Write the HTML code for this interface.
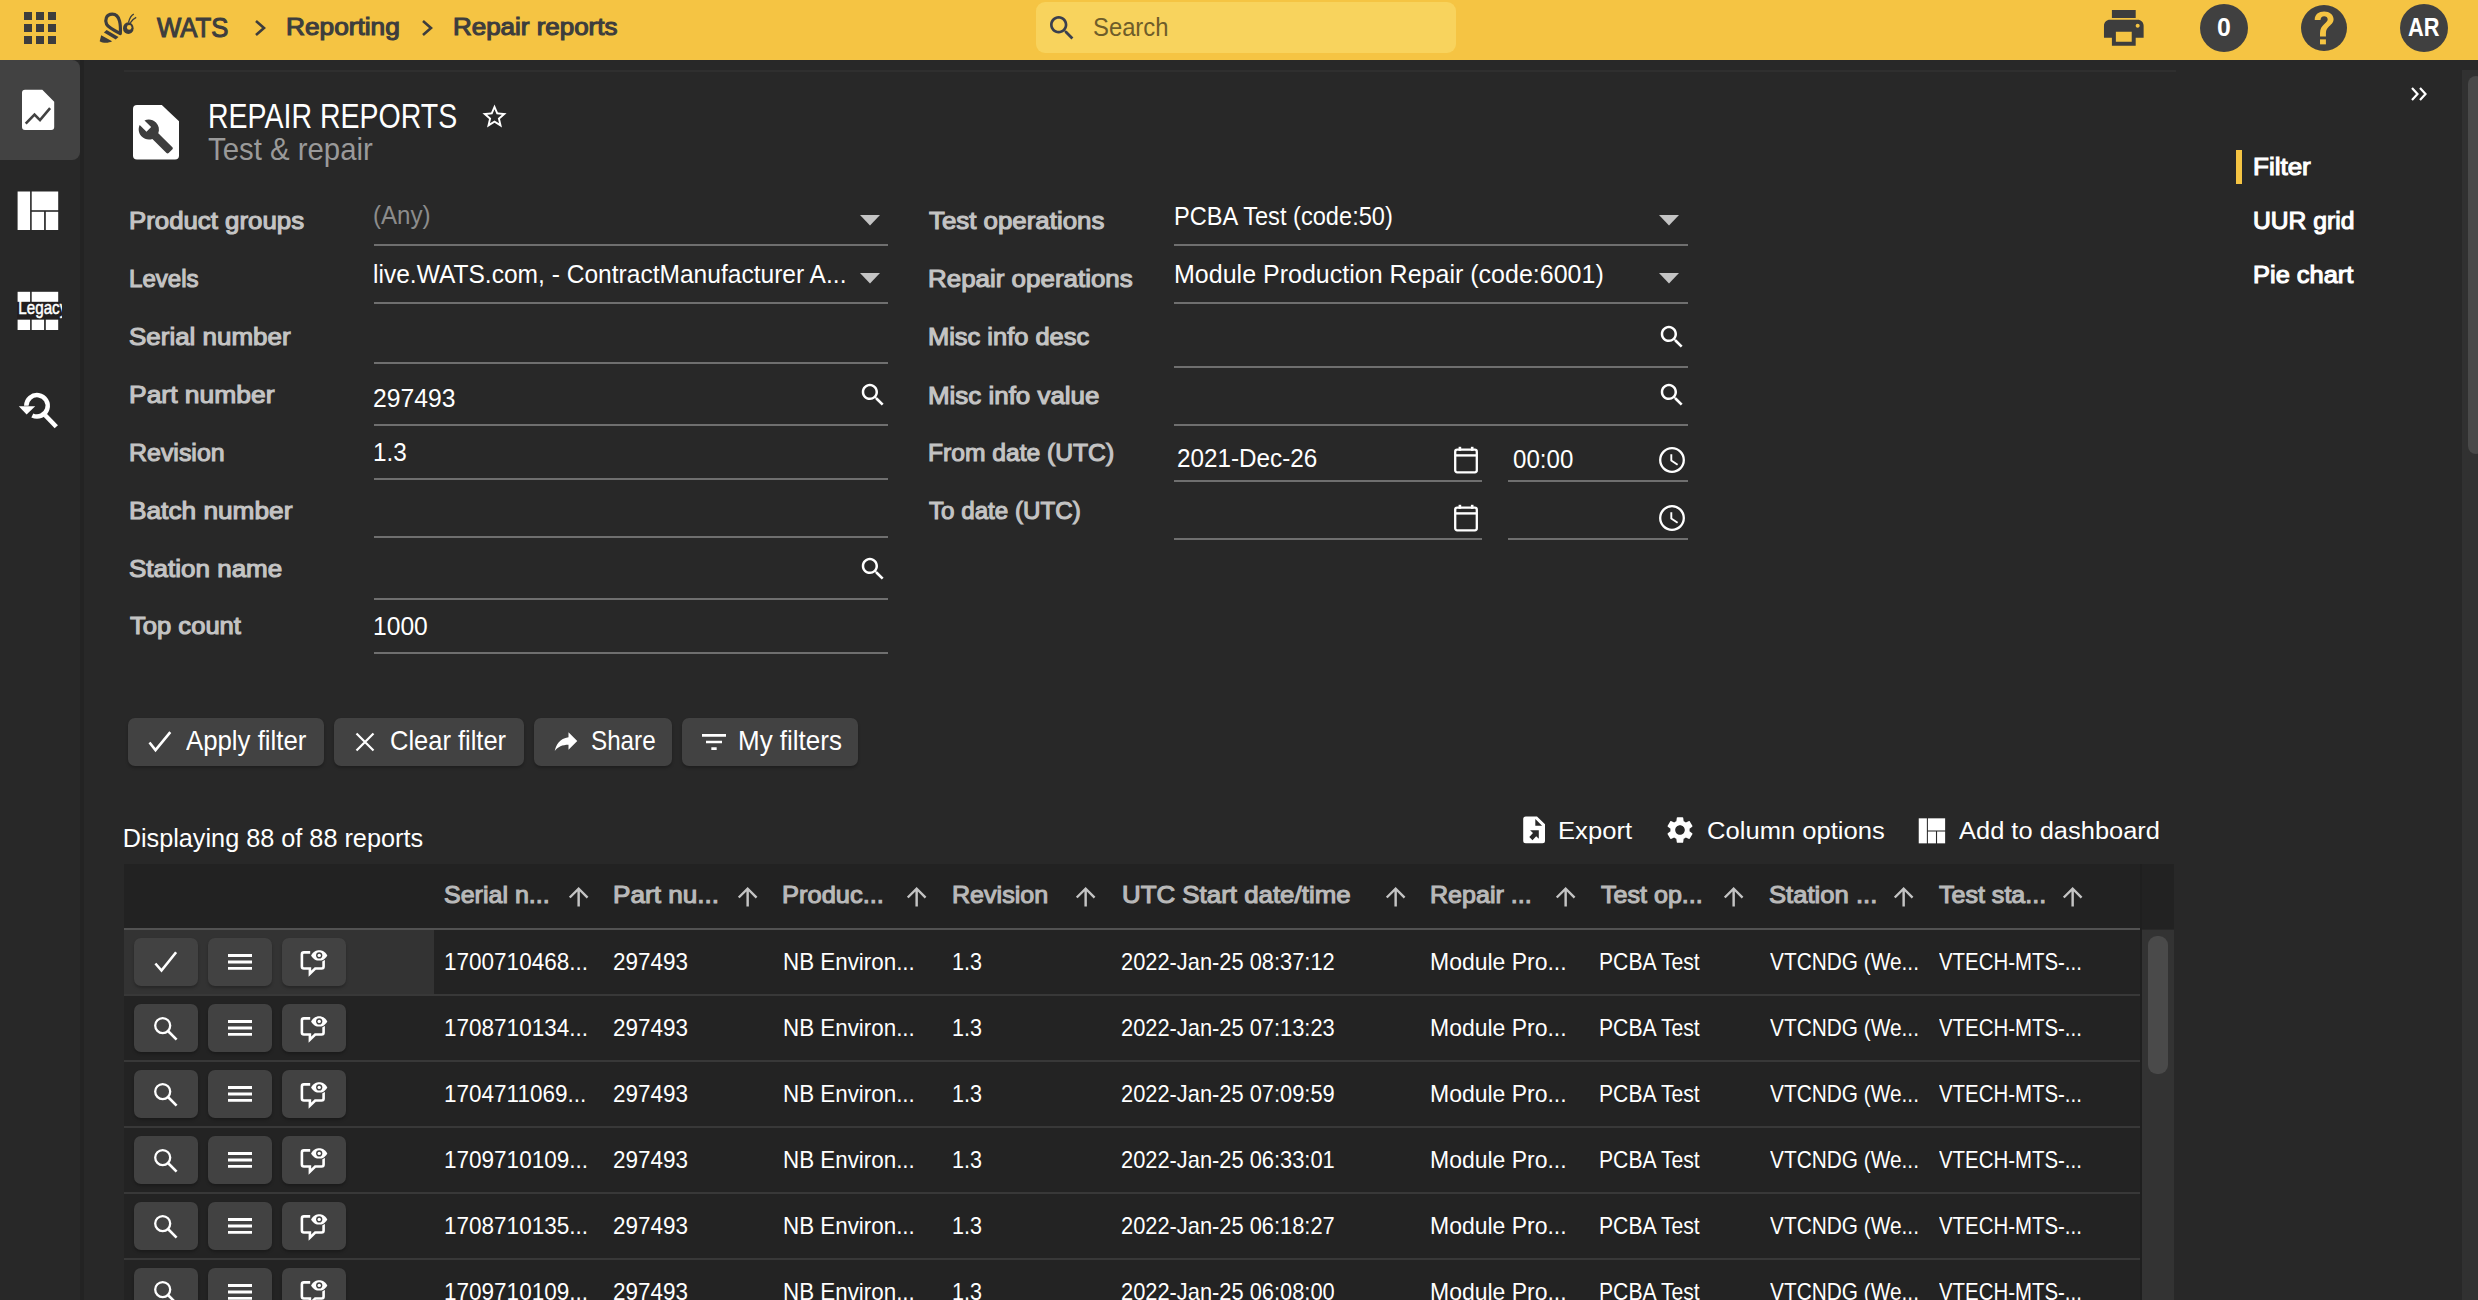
<!DOCTYPE html>
<html><head><meta charset="utf-8"><title>Repair reports</title>
<style>
html,body{margin:0;padding:0;width:2478px;height:1300px;overflow:hidden;background:#282828;font-family:"Liberation Sans",sans-serif}
.b{position:absolute}
.i{position:absolute;overflow:visible}
.t{position:absolute;white-space:pre;transform-origin:0 0}
.btn{background:#424242;border-radius:7px;box-shadow:0 2px 3px rgba(0,0,0,.25)}
.rbtn{background:#424242;border-radius:7px;box-shadow:0 2px 3px rgba(0,0,0,.25)}
</style></head><body>
<div class="b" style="left:0;top:0;width:2478px;height:60px;background:#f5c443"></div>
<svg class="i" style="left:24px;top:12px;width:32px;height:32px;" viewBox="0 0 32 32"><g fill="#3d3d3d"><rect x="0" y="0" width="8" height="8"/><rect x="12" y="0" width="8" height="8"/><rect x="24" y="0" width="8" height="8"/><rect x="0" y="12" width="8" height="8"/><rect x="12" y="12" width="8" height="8"/><rect x="24" y="12" width="8" height="8"/><rect x="0" y="24" width="8" height="8"/><rect x="12" y="24" width="8" height="8"/><rect x="24" y="24" width="8" height="8"/></g></svg>
<svg class="i" style="left:96px;top:10px;width:44px;height:36px;" viewBox="96 10 44 36"><path d="M120.3 33.6 C120.8 26 120.5 14.2 112.3 14.2 C105.8 14.2 104.8 20.5 106.6 24.2 C108 27 112 29.3 120.3 33.6 Z" fill="none" stroke="#3d3d3d" stroke-width="3.2" stroke-linejoin="round"/><g fill="#3d3d3d"><path d="M103.9 32.5 L106.6 30.1 L118.5 37.1 L115.7 39.6 Z"/><path d="M101.2 35.3 L112.1 41.3 C109 43.2 103 43.4 99.7 41.3 Z"/><ellipse cx="128.3" cy="28.2" rx="5.3" ry="5.9"/></g><circle cx="129.2" cy="27.4" r="2.3" fill="#f5c443"/><g fill="none" stroke="#3d3d3d" stroke-width="1.3"><path d="M128.5 22.5 C129.5 18.5 130.8 15.5 133.8 14.1"/><path d="M130.3 22.8 C132 20.3 134 18.4 136.2 17.4"/></g></svg>
<svg class="i" style="left:254.3px;top:19px;width:13px;height:18px;" viewBox="0 0 13 18"><path d="M2 2 L10 9 L2 16" fill="none" stroke="#3d3d3d" stroke-width="2.6"/></svg>
<svg class="i" style="left:420.6px;top:19px;width:13px;height:18px;" viewBox="0 0 13 18"><path d="M2 2 L10 9 L2 16" fill="none" stroke="#3d3d3d" stroke-width="2.6"/></svg>
<div class="b" style="left:1036px;top:2px;width:420px;height:51px;border-radius:9px;background:#f8d35d"></div>
<svg class="i" style="left:1045.8px;top:11.8px;width:32.1px;height:32.1px;" viewBox="0 0 24 24"><path fill="#3a3f4e" d="M15.5 14h-.79l-.28-.27C15.41 12.59 16 11.11 16 9.5 16 5.91 13.09 3 9.5 3S3 5.91 3 9.5 5.91 16 9.5 16c1.61 0 3.09-.59 4.23-1.57l.27.28v.79l5 4.99L20.49 19l-4.99-5zm-6 0C7.01 14 5 11.99 5 9.5S7.01 5 9.5 5 14 7.01 14 9.5 11.99 14 9.5 14z"/></svg>
<svg class="i" style="left:2100.3px;top:4.3px;width:47.6px;height:47.6px;" viewBox="0 0 24 24"><path fill="#3d3d3d" d="M19 8H5c-1.66 0-3 1.34-3 3v6h4v4h12v-4h4v-6c0-1.66-1.34-3-3-3zm-3 11H8v-5h8v5zm3-7c-.55 0-1-.45-1-1s.45-1 1-1 1 .45 1 1-.45 1-1 1zm-1-9H6v4h12V3z"/></svg>
<div class="b" style="left:2200px;top:4px;width:48px;height:48px;border-radius:50%;background:#404040"></div>
<div class="b" style="left:2400px;top:4px;width:48px;height:48px;border-radius:50%;background:#404040"></div>
<div class="b" style="left:2301px;top:5px;width:46px;height:46px;border-radius:50%;background:#404040"></div>
<svg class="i" style="left:2310px;top:11px;width:28px;height:36px;" viewBox="0 0 28 36"><g transform="translate(4.7,0.6) scale(1.18,1.11) translate(-6,-3.5)"><path d="M6 11 C6 6 9.5 3.5 14 3.5 C18.5 3.5 22 6.5 22 10.5 C22 14 19.5 15.5 17.5 17.5 C15.8 19.2 15.5 21 15.5 23.5 L15.5 26 L10.5 26 L10.5 23 C10.5 19 12 17 14 15 C16 13 17 12 17 10.5 C17 8.8 15.7 7.7 14 7.7 C12.2 7.7 10.9 9 10.9 11 Z" fill="#f5c443"/><rect x="10.5" y="28.5" width="5" height="4.5" fill="#f5c443"/></g></svg>
<div class="b" style="left:80px;top:60px;width:4px;height:1240px;background:#232323"></div>
<div class="b" style="left:-8px;top:60px;width:88px;height:100px;border-radius:0 8px 8px 8px;background:#424242"></div>
<svg class="i" style="left:20px;top:88px;width:36px;height:44px;" viewBox="20 88 36 44"><path d="M25 89.7 H42.3 L54.2 101.7 V127 A3 3 0 0 1 51.2 130 H25 A3 3 0 0 1 22 127 V92.7 A3 3 0 0 1 25 89.7 Z" fill="#fff"/><path d="M25.7 123.6 L34.5 114.6 L40 120.1 L50.1 108.1" fill="none" stroke="#424242" stroke-width="2.6"/></svg>
<svg class="i" style="left:17px;top:191px;width:42px;height:40px;" viewBox="0 0 42 40"><g fill="#fff" transform="translate(0.6,0.5) scale(1.0)"><rect x="0" y="0" width="12.5" height="38.5"/><rect x="14.1" y="0" width="26.5" height="18.7"/><rect x="14.1" y="20.3" width="12.4" height="18.2"/><rect x="28.2" y="20.3" width="12.4" height="18.2"/></g></svg>
<svg class="i" style="left:17px;top:290px;width:45px;height:42px;overflow:hidden" viewBox="17 290 45 42"><g fill="#fff"><rect x="17.6" y="291.8" width="12.5" height="10"/><rect x="31.7" y="291.8" width="26.5" height="10"/><rect x="17.6" y="319.7" width="12.5" height="10.3"/><rect x="31.7" y="319.7" width="12.4" height="10.3"/><rect x="45.8" y="319.7" width="12.4" height="10.3"/></g><rect x="14.2" y="302" width="47.8" height="17" fill="#231f20"/><text x="18.3" y="314.4" font-family="Liberation Sans" font-size="19" fill="#fff" stroke="#fff" stroke-width="0.5" textLength="49" lengthAdjust="spacingAndGlyphs">Legacy</text></svg>
<svg class="i" style="left:16px;top:384px;width:44px;height:46px;" viewBox="16 384 44 46"><path d="M26.3 405.8 A10.7 10.7 0 1 1 32.3 415.4" fill="none" stroke="#fff" stroke-width="4.5"/><path d="M18.8 406.3 H35.2 L26.6 414.6 Z" fill="#fff"/><path d="M45.2 415.2 L56.3 426.8" stroke="#fff" stroke-width="4.5"/></svg>
<div class="b" style="left:124px;top:70px;width:2052px;height:2px;background:#2f2f2f"></div>
<svg class="i" style="left:131px;top:103px;width:50px;height:58px;" viewBox="131 103 50 58"><path d="M137 105 H161.8 L179 121.2 V155.5 A4 4 0 0 1 175 159.5 H137 A4 4 0 0 1 133 155.5 V109 A4 4 0 0 1 137 105 Z" fill="#fff"/><g transform="translate(137.2,117.8) scale(1.55)"><path fill="#3d3d3d" d="M22.7 19l-9.1-9.1c.9-2.3.4-5-1.5-6.9-2-2-5-2.4-7.4-1.3L9 6 6 9 1.6 4.7C.4 7.1.9 10.1 2.9 12.1c1.9 1.9 4.6 2.4 6.9 1.5l9.1 9.1c.4.4 1 .4 1.4 0l2.3-2.3c.5-.4.5-1.1.1-1.4z"/></g></svg>
<svg class="i" style="left:479.6px;top:101.5px;width:29px;height:29px;" viewBox="0 0 24 24"><path fill="#fff" d="M22 9.24l-7.19-.62L12 2 9.19 8.63 2 9.24l5.46 4.73L5.82 21 12 17.27 18.18 21l-1.63-7.03L22 9.24zM12 15.4l-3.76 2.27 1-4.28-3.32-2.88 4.38-.38L12 6.1l1.71 4.04 4.38.38-3.32 2.88 1 4.28L12 15.4z"/></svg>
<div class="b" style="left:2236px;top:150px;width:6px;height:34px;background:#f5c443"></div>
<svg class="i" style="left:2410px;top:86px;width:20px;height:16px;" viewBox="0 0 20 16"><path d="M2 2 L7.5 8 L2 14 M10 2 L15.5 8 L10 14" fill="none" stroke="#fff" stroke-width="2.2"/></svg>
<div class="b" style="left:2462px;top:70px;width:16px;height:1230px;background:#313131"></div>
<div class="b" style="left:2468px;top:76px;width:16px;height:378px;border-radius:8px;background:#494949"></div>
<div class="b" style="left:374px;top:244px;width:514px;height:2px;background:#6f6f6f"></div>
<div class="b" style="left:374px;top:302px;width:514px;height:2px;background:#6f6f6f"></div>
<div class="b" style="left:374px;top:362px;width:514px;height:2px;background:#6f6f6f"></div>
<div class="b" style="left:374px;top:424px;width:514px;height:2px;background:#6f6f6f"></div>
<div class="b" style="left:374px;top:478px;width:514px;height:2px;background:#6f6f6f"></div>
<div class="b" style="left:374px;top:536px;width:514px;height:2px;background:#6f6f6f"></div>
<div class="b" style="left:374px;top:598px;width:514px;height:2px;background:#6f6f6f"></div>
<div class="b" style="left:374px;top:652px;width:514px;height:2px;background:#6f6f6f"></div>
<div class="b" style="left:1174px;top:244px;width:514px;height:2px;background:#6f6f6f"></div>
<div class="b" style="left:1174px;top:302px;width:514px;height:2px;background:#6f6f6f"></div>
<div class="b" style="left:1174px;top:366px;width:514px;height:2px;background:#6f6f6f"></div>
<div class="b" style="left:1174px;top:424px;width:514px;height:2px;background:#6f6f6f"></div>
<div class="b" style="left:1174px;top:480px;width:308px;height:2px;background:#6f6f6f"></div>
<div class="b" style="left:1508px;top:480px;width:180px;height:2px;background:#6f6f6f"></div>
<div class="b" style="left:1174px;top:538px;width:308px;height:2px;background:#6f6f6f"></div>
<div class="b" style="left:1508px;top:538px;width:180px;height:2px;background:#6f6f6f"></div>
<svg class="i" style="left:860px;top:215.4px;width:20px;height:11px;" viewBox="0 0 20 11"><path d="M0 0 H20 L10 10.6 Z" fill="#c4c4c4"/></svg>
<svg class="i" style="left:860px;top:273.4px;width:20px;height:11px;" viewBox="0 0 20 11"><path d="M0 0 H20 L10 10.6 Z" fill="#c4c4c4"/></svg>
<svg class="i" style="left:1659px;top:215.4px;width:20px;height:11px;" viewBox="0 0 20 11"><path d="M0 0 H20 L10 10.6 Z" fill="#c4c4c4"/></svg>
<svg class="i" style="left:1659px;top:273.4px;width:20px;height:11px;" viewBox="0 0 20 11"><path d="M0 0 H20 L10 10.6 Z" fill="#c4c4c4"/></svg>
<svg class="i" style="left:857.6px;top:379.5px;width:30px;height:30px;" viewBox="0 0 24 24"><path fill="#fff" d="M15.5 14h-.79l-.28-.27C15.41 12.59 16 11.11 16 9.5 16 5.91 13.09 3 9.5 3S3 5.91 3 9.5 5.91 16 9.5 16c1.61 0 3.09-.59 4.23-1.57l.27.28v.79l5 4.99L20.49 19l-4.99-5zm-6 0C7.01 14 5 11.99 5 9.5S7.01 5 9.5 5 14 7.01 14 9.5 11.99 14 9.5 14z"/></svg>
<svg class="i" style="left:857.6px;top:553.7px;width:30px;height:30px;" viewBox="0 0 24 24"><path fill="#fff" d="M15.5 14h-.79l-.28-.27C15.41 12.59 16 11.11 16 9.5 16 5.91 13.09 3 9.5 3S3 5.91 3 9.5 5.91 16 9.5 16c1.61 0 3.09-.59 4.23-1.57l.27.28v.79l5 4.99L20.49 19l-4.99-5zm-6 0C7.01 14 5 11.99 5 9.5S7.01 5 9.5 5 14 7.01 14 9.5 11.99 14 9.5 14z"/></svg>
<svg class="i" style="left:1656.6px;top:321.8px;width:30px;height:30px;" viewBox="0 0 24 24"><path fill="#fff" d="M15.5 14h-.79l-.28-.27C15.41 12.59 16 11.11 16 9.5 16 5.91 13.09 3 9.5 3S3 5.91 3 9.5 5.91 16 9.5 16c1.61 0 3.09-.59 4.23-1.57l.27.28v.79l5 4.99L20.49 19l-4.99-5zm-6 0C7.01 14 5 11.99 5 9.5S7.01 5 9.5 5 14 7.01 14 9.5 11.99 14 9.5 14z"/></svg>
<svg class="i" style="left:1656.6px;top:379.6px;width:30px;height:30px;" viewBox="0 0 24 24"><path fill="#fff" d="M15.5 14h-.79l-.28-.27C15.41 12.59 16 11.11 16 9.5 16 5.91 13.09 3 9.5 3S3 5.91 3 9.5 5.91 16 9.5 16c1.61 0 3.09-.59 4.23-1.57l.27.28v.79l5 4.99L20.49 19l-4.99-5zm-6 0C7.01 14 5 11.99 5 9.5S7.01 5 9.5 5 14 7.01 14 9.5 11.99 14 9.5 14z"/></svg>
<svg class="i" style="left:1454.2px;top:446px;width:26px;height:28px;" viewBox="0 0 26 28"><rect x="1.2" y="3.7" width="21.6" height="22.6" rx="2" fill="none" stroke="#fff" stroke-width="2.3"/><rect x="1.2" y="8.2" width="21.6" height="2.4" fill="#fff"/><rect x="4.6" y="0.8" width="2.6" height="4" fill="#fff"/><rect x="16.9" y="0.8" width="2.6" height="4" fill="#fff"/></svg>
<svg class="i" style="left:1454.2px;top:504.2px;width:26px;height:28px;" viewBox="0 0 26 28"><rect x="1.2" y="3.7" width="21.6" height="22.6" rx="2" fill="none" stroke="#fff" stroke-width="2.3"/><rect x="1.2" y="8.2" width="21.6" height="2.4" fill="#fff"/><rect x="4.6" y="0.8" width="2.6" height="4" fill="#fff"/><rect x="16.9" y="0.8" width="2.6" height="4" fill="#fff"/></svg>
<svg class="i" style="left:1658.1px;top:446px;width:28px;height:28px;" viewBox="0 0 28 28"><circle cx="14" cy="14" r="11.8" fill="none" stroke="#fff" stroke-width="2.3"/><path d="M13.3 8.2 V14.5 L19.6 18.7" fill="none" stroke="#fff" stroke-width="1.9"/></svg>
<svg class="i" style="left:1658.1px;top:503.6px;width:28px;height:28px;" viewBox="0 0 28 28"><circle cx="14" cy="14" r="11.8" fill="none" stroke="#fff" stroke-width="2.3"/><path d="M13.3 8.2 V14.5 L19.6 18.7" fill="none" stroke="#fff" stroke-width="1.9"/></svg>
<div class="b btn" style="left:128px;top:718px;width:196px;height:48px"></div>
<div class="b btn" style="left:334px;top:718px;width:190px;height:48px"></div>
<div class="b btn" style="left:534px;top:718px;width:138px;height:48px"></div>
<div class="b btn" style="left:682px;top:718px;width:176px;height:48px"></div>
<svg class="i" style="left:140px;top:722px;width:40px;height:40px;" viewBox="140 722 40 40"><path d="M149.5 742.5 L155.5 750.1 L170.3 732.2" fill="none" stroke="#fff" stroke-width="2.6"/></svg>
<svg class="i" style="left:355px;top:731.7px;width:20px;height:20px;" viewBox="0 0 20 20"><path d="M1.5 1.5 L18.5 18.5 M18.5 1.5 L1.5 18.5" stroke="#fff" stroke-width="2.2"/></svg>
<svg class="i" style="left:551px;top:726.2px;width:30px;height:30px;" viewBox="0 0 24 24"><path fill="#fff" d="M14 9V5l7 7-7 7v-4.1c-5 0-8.5 1.6-11 5.1 1-5 4-10 11-11z"/></svg>
<svg class="i" style="left:698px;top:726px;width:32px;height:32px;" viewBox="0 0 24 24"><path fill="#fff" d="M10 18h4v-2h-4v2zM3 6v2h18V6H3zm3 7h12v-2H6v2z"/></svg>
<svg class="i" style="left:1522px;top:816px;width:25px;height:28px;" viewBox="0 0 25 28"><path d="M3.7 0.6 H15 L23 8.2 V24.7 A2.5 2.5 0 0 1 20.5 27.2 H3.7 A2.5 2.5 0 0 1 1.2 24.7 V3.1 A2.5 2.5 0 0 1 3.7 0.6 Z" fill="#fff"/><path d="M13.3 3.1 V9.8 H20.1 Z" fill="#282828"/><path d="M8.1 14.2 H16.8 V22.8 L14.2 20.3 L10.5 24.3 L7.3 20.9 L11 17.1 Z" fill="#282828"/></svg>
<svg class="i" style="left:1664.2px;top:813.6px;width:32px;height:32px;" viewBox="0 0 24 24"><path fill="#fff" d="M19.14 12.94c.04-.3.06-.61.06-.94 0-.32-.02-.64-.07-.94l2.03-1.58c.18-.14.23-.41.12-.61l-1.92-3.32c-.12-.22-.37-.29-.59-.22l-2.39.96c-.5-.38-1.03-.7-1.62-.94l-.36-2.54c-.04-.24-.24-.41-.48-.41h-3.84c-.24 0-.43.17-.47.41l-.36 2.54c-.59.24-1.13.57-1.62.94l-2.39-.96c-.22-.08-.47 0-.59.22L2.74 8.87c-.12.21-.08.47.12.61l2.03 1.58c-.05.3-.09.63-.09.94s.02.64.07.94l-2.03 1.58c-.18.14-.23.41-.12.61l1.92 3.32c.12.22.37.29.59.22l2.39-.96c.5.38 1.03.7 1.62.94l.36 2.54c.05.24.24.41.48.41h3.84c.24 0 .44-.17.47-.41l.36-2.54c.59-.24 1.13-.56 1.62-.94l2.39.96c.22.08.47 0 .59-.22l1.92-3.32c.12-.22.07-.47-.12-.61l-2.01-1.58zM12 15.6c-1.98 0-3.6-1.62-3.6-3.6s1.62-3.6 3.6-3.6 3.6 1.62 3.6 3.6-1.62 3.6-3.6 3.6z"/></svg>
<svg class="i" style="left:1918px;top:818px;width:28px;height:26px;" viewBox="0 0 42 40"><g fill="#fff" transform="translate(0.6,0.5) scale(1.0)"><rect x="0" y="0" width="12.5" height="38.5"/><rect x="14.1" y="0" width="26.5" height="18.7"/><rect x="14.1" y="20.3" width="12.4" height="18.2"/><rect x="28.2" y="20.3" width="12.4" height="18.2"/></g></svg>
<div class="b" style="left:124px;top:864px;width:2050px;height:65px;background:#222222"></div>
<div class="b" style="left:124px;top:930px;width:2016px;height:370px;background:#232323"></div>
<div class="b" style="left:2142px;top:930px;width:32px;height:370px;background:#333333"></div>
<div class="b" style="left:2140px;top:864px;width:2px;height:436px;background:#1f1f1f"></div>
<div class="b" style="left:2147.5px;top:935.6px;width:20.5px;height:138px;border-radius:9px;background:#4a4a4a"></div>
<div class="b" style="left:124px;top:928px;width:2016px;height:2px;background:#525252"></div>
<div class="b" style="left:124px;top:930px;width:310px;height:64px;background:#333333"></div>
<div class="b" style="left:124px;top:994px;width:2016px;height:2px;background:#383838"></div>
<div class="b" style="left:124px;top:1060px;width:2016px;height:2px;background:#383838"></div>
<div class="b" style="left:124px;top:1126px;width:2016px;height:2px;background:#383838"></div>
<div class="b" style="left:124px;top:1192px;width:2016px;height:2px;background:#383838"></div>
<div class="b" style="left:124px;top:1258px;width:2016px;height:2px;background:#383838"></div>
<svg class="i" style="left:563.5px;top:881.6px;width:29.3px;height:29.3px;" viewBox="0 0 24 24"><path fill="#c4c4c4" d="M4 12l1.41 1.41L11 7.83V20h2V7.83l5.58 5.59L20 12l-8-8-8 8z"/></svg>
<svg class="i" style="left:733.1px;top:881.6px;width:29.3px;height:29.3px;" viewBox="0 0 24 24"><path fill="#c4c4c4" d="M4 12l1.41 1.41L11 7.83V20h2V7.83l5.58 5.59L20 12l-8-8-8 8z"/></svg>
<svg class="i" style="left:901.9px;top:881.6px;width:29.3px;height:29.3px;" viewBox="0 0 24 24"><path fill="#c4c4c4" d="M4 12l1.41 1.41L11 7.83V20h2V7.83l5.58 5.59L20 12l-8-8-8 8z"/></svg>
<svg class="i" style="left:1071.3999999999999px;top:881.6px;width:29.3px;height:29.3px;" viewBox="0 0 24 24"><path fill="#c4c4c4" d="M4 12l1.41 1.41L11 7.83V20h2V7.83l5.58 5.59L20 12l-8-8-8 8z"/></svg>
<svg class="i" style="left:1381.0px;top:881.6px;width:29.3px;height:29.3px;" viewBox="0 0 24 24"><path fill="#c4c4c4" d="M4 12l1.41 1.41L11 7.83V20h2V7.83l5.58 5.59L20 12l-8-8-8 8z"/></svg>
<svg class="i" style="left:1550.5px;top:881.6px;width:29.3px;height:29.3px;" viewBox="0 0 24 24"><path fill="#c4c4c4" d="M4 12l1.41 1.41L11 7.83V20h2V7.83l5.58 5.59L20 12l-8-8-8 8z"/></svg>
<svg class="i" style="left:1719.3999999999999px;top:881.6px;width:29.3px;height:29.3px;" viewBox="0 0 24 24"><path fill="#c4c4c4" d="M4 12l1.41 1.41L11 7.83V20h2V7.83l5.58 5.59L20 12l-8-8-8 8z"/></svg>
<svg class="i" style="left:1888.8999999999999px;top:881.6px;width:29.3px;height:29.3px;" viewBox="0 0 24 24"><path fill="#c4c4c4" d="M4 12l1.41 1.41L11 7.83V20h2V7.83l5.58 5.59L20 12l-8-8-8 8z"/></svg>
<svg class="i" style="left:2058.0px;top:881.6px;width:29.3px;height:29.3px;" viewBox="0 0 24 24"><path fill="#c4c4c4" d="M4 12l1.41 1.41L11 7.83V20h2V7.83l5.58 5.59L20 12l-8-8-8 8z"/></svg>
<div class="b rbtn" style="left:134px;top:938px;width:64px;height:48px"></div>
<div class="b rbtn" style="left:208px;top:938px;width:64px;height:48px"></div>
<div class="b rbtn" style="left:282px;top:938px;width:64px;height:48px"></div>
<svg class="i" style="left:134px;top:938px;width:64px;height:48px;" viewBox="0 0 64 48"><path d="M21.4 25.5 L27.5 32.5 L42.1 14.2" fill="none" stroke="#fff" stroke-width="2.6"/></svg>
<svg class="i" style="left:226px;top:952px;width:28px;height:22px;" viewBox="0 0 28 22"><path d="M2 3.5 H26 M2 10 H26 M2 16.4 H26" stroke="#fff" stroke-width="2.8"/></svg>
<svg class="i" style="left:282px;top:938px;width:64px;height:48px;" viewBox="0 0 64 48"><path d="M28.2 14.4 H21.9 A2 2 0 0 0 19.9 16.4 V28.5 A2 2 0 0 0 21.9 30.5 H27.9 V35.6 L33.2 30.5 H39.6 A2 2 0 0 0 41.6 28.5 V22" fill="none" stroke="#fff" stroke-width="2.6"/><path d="M29.1 17.4 C31.5 13.2 34.5 12.2 37.2 12.2 C39.9 12.2 42.9 13.2 45.3 17.4 C42.9 21.6 39.9 22.6 37.2 22.6 C34.5 22.6 31.5 21.6 29.1 17.4Z" fill="#fff" stroke="#424242" stroke-width="2.2" paint-order="stroke"/><circle cx="37.2" cy="17.4" r="3.1" fill="#424242"/><circle cx="37.2" cy="17.4" r="1.7" fill="#fff"/></svg>
<div class="b rbtn" style="left:134px;top:1004px;width:64px;height:48px"></div>
<div class="b rbtn" style="left:208px;top:1004px;width:64px;height:48px"></div>
<div class="b rbtn" style="left:282px;top:1004px;width:64px;height:48px"></div>
<svg class="i" style="left:150px;top:1013px;width:32px;height:32px;" viewBox="0 0 32 32"><circle cx="12.7" cy="12.6" r="7.5" fill="none" stroke="#fff" stroke-width="2.3"/><path d="M18 18 L26.6 26.7" stroke="#fff" stroke-width="2.6"/></svg>
<svg class="i" style="left:226px;top:1018px;width:28px;height:22px;" viewBox="0 0 28 22"><path d="M2 3.5 H26 M2 10 H26 M2 16.4 H26" stroke="#fff" stroke-width="2.8"/></svg>
<svg class="i" style="left:282px;top:1004px;width:64px;height:48px;" viewBox="0 0 64 48"><path d="M28.2 14.4 H21.9 A2 2 0 0 0 19.9 16.4 V28.5 A2 2 0 0 0 21.9 30.5 H27.9 V35.6 L33.2 30.5 H39.6 A2 2 0 0 0 41.6 28.5 V22" fill="none" stroke="#fff" stroke-width="2.6"/><path d="M29.1 17.4 C31.5 13.2 34.5 12.2 37.2 12.2 C39.9 12.2 42.9 13.2 45.3 17.4 C42.9 21.6 39.9 22.6 37.2 22.6 C34.5 22.6 31.5 21.6 29.1 17.4Z" fill="#fff" stroke="#424242" stroke-width="2.2" paint-order="stroke"/><circle cx="37.2" cy="17.4" r="3.1" fill="#424242"/><circle cx="37.2" cy="17.4" r="1.7" fill="#fff"/></svg>
<div class="b rbtn" style="left:134px;top:1070px;width:64px;height:48px"></div>
<div class="b rbtn" style="left:208px;top:1070px;width:64px;height:48px"></div>
<div class="b rbtn" style="left:282px;top:1070px;width:64px;height:48px"></div>
<svg class="i" style="left:150px;top:1079px;width:32px;height:32px;" viewBox="0 0 32 32"><circle cx="12.7" cy="12.6" r="7.5" fill="none" stroke="#fff" stroke-width="2.3"/><path d="M18 18 L26.6 26.7" stroke="#fff" stroke-width="2.6"/></svg>
<svg class="i" style="left:226px;top:1084px;width:28px;height:22px;" viewBox="0 0 28 22"><path d="M2 3.5 H26 M2 10 H26 M2 16.4 H26" stroke="#fff" stroke-width="2.8"/></svg>
<svg class="i" style="left:282px;top:1070px;width:64px;height:48px;" viewBox="0 0 64 48"><path d="M28.2 14.4 H21.9 A2 2 0 0 0 19.9 16.4 V28.5 A2 2 0 0 0 21.9 30.5 H27.9 V35.6 L33.2 30.5 H39.6 A2 2 0 0 0 41.6 28.5 V22" fill="none" stroke="#fff" stroke-width="2.6"/><path d="M29.1 17.4 C31.5 13.2 34.5 12.2 37.2 12.2 C39.9 12.2 42.9 13.2 45.3 17.4 C42.9 21.6 39.9 22.6 37.2 22.6 C34.5 22.6 31.5 21.6 29.1 17.4Z" fill="#fff" stroke="#424242" stroke-width="2.2" paint-order="stroke"/><circle cx="37.2" cy="17.4" r="3.1" fill="#424242"/><circle cx="37.2" cy="17.4" r="1.7" fill="#fff"/></svg>
<div class="b rbtn" style="left:134px;top:1136px;width:64px;height:48px"></div>
<div class="b rbtn" style="left:208px;top:1136px;width:64px;height:48px"></div>
<div class="b rbtn" style="left:282px;top:1136px;width:64px;height:48px"></div>
<svg class="i" style="left:150px;top:1145px;width:32px;height:32px;" viewBox="0 0 32 32"><circle cx="12.7" cy="12.6" r="7.5" fill="none" stroke="#fff" stroke-width="2.3"/><path d="M18 18 L26.6 26.7" stroke="#fff" stroke-width="2.6"/></svg>
<svg class="i" style="left:226px;top:1150px;width:28px;height:22px;" viewBox="0 0 28 22"><path d="M2 3.5 H26 M2 10 H26 M2 16.4 H26" stroke="#fff" stroke-width="2.8"/></svg>
<svg class="i" style="left:282px;top:1136px;width:64px;height:48px;" viewBox="0 0 64 48"><path d="M28.2 14.4 H21.9 A2 2 0 0 0 19.9 16.4 V28.5 A2 2 0 0 0 21.9 30.5 H27.9 V35.6 L33.2 30.5 H39.6 A2 2 0 0 0 41.6 28.5 V22" fill="none" stroke="#fff" stroke-width="2.6"/><path d="M29.1 17.4 C31.5 13.2 34.5 12.2 37.2 12.2 C39.9 12.2 42.9 13.2 45.3 17.4 C42.9 21.6 39.9 22.6 37.2 22.6 C34.5 22.6 31.5 21.6 29.1 17.4Z" fill="#fff" stroke="#424242" stroke-width="2.2" paint-order="stroke"/><circle cx="37.2" cy="17.4" r="3.1" fill="#424242"/><circle cx="37.2" cy="17.4" r="1.7" fill="#fff"/></svg>
<div class="b rbtn" style="left:134px;top:1202px;width:64px;height:48px"></div>
<div class="b rbtn" style="left:208px;top:1202px;width:64px;height:48px"></div>
<div class="b rbtn" style="left:282px;top:1202px;width:64px;height:48px"></div>
<svg class="i" style="left:150px;top:1211px;width:32px;height:32px;" viewBox="0 0 32 32"><circle cx="12.7" cy="12.6" r="7.5" fill="none" stroke="#fff" stroke-width="2.3"/><path d="M18 18 L26.6 26.7" stroke="#fff" stroke-width="2.6"/></svg>
<svg class="i" style="left:226px;top:1216px;width:28px;height:22px;" viewBox="0 0 28 22"><path d="M2 3.5 H26 M2 10 H26 M2 16.4 H26" stroke="#fff" stroke-width="2.8"/></svg>
<svg class="i" style="left:282px;top:1202px;width:64px;height:48px;" viewBox="0 0 64 48"><path d="M28.2 14.4 H21.9 A2 2 0 0 0 19.9 16.4 V28.5 A2 2 0 0 0 21.9 30.5 H27.9 V35.6 L33.2 30.5 H39.6 A2 2 0 0 0 41.6 28.5 V22" fill="none" stroke="#fff" stroke-width="2.6"/><path d="M29.1 17.4 C31.5 13.2 34.5 12.2 37.2 12.2 C39.9 12.2 42.9 13.2 45.3 17.4 C42.9 21.6 39.9 22.6 37.2 22.6 C34.5 22.6 31.5 21.6 29.1 17.4Z" fill="#fff" stroke="#424242" stroke-width="2.2" paint-order="stroke"/><circle cx="37.2" cy="17.4" r="3.1" fill="#424242"/><circle cx="37.2" cy="17.4" r="1.7" fill="#fff"/></svg>
<div class="b rbtn" style="left:134px;top:1268px;width:64px;height:48px"></div>
<div class="b rbtn" style="left:208px;top:1268px;width:64px;height:48px"></div>
<div class="b rbtn" style="left:282px;top:1268px;width:64px;height:48px"></div>
<svg class="i" style="left:150px;top:1277px;width:32px;height:32px;" viewBox="0 0 32 32"><circle cx="12.7" cy="12.6" r="7.5" fill="none" stroke="#fff" stroke-width="2.3"/><path d="M18 18 L26.6 26.7" stroke="#fff" stroke-width="2.6"/></svg>
<svg class="i" style="left:226px;top:1282px;width:28px;height:22px;" viewBox="0 0 28 22"><path d="M2 3.5 H26 M2 10 H26 M2 16.4 H26" stroke="#fff" stroke-width="2.8"/></svg>
<svg class="i" style="left:282px;top:1268px;width:64px;height:48px;" viewBox="0 0 64 48"><path d="M28.2 14.4 H21.9 A2 2 0 0 0 19.9 16.4 V28.5 A2 2 0 0 0 21.9 30.5 H27.9 V35.6 L33.2 30.5 H39.6 A2 2 0 0 0 41.6 28.5 V22" fill="none" stroke="#fff" stroke-width="2.6"/><path d="M29.1 17.4 C31.5 13.2 34.5 12.2 37.2 12.2 C39.9 12.2 42.9 13.2 45.3 17.4 C42.9 21.6 39.9 22.6 37.2 22.6 C34.5 22.6 31.5 21.6 29.1 17.4Z" fill="#fff" stroke="#424242" stroke-width="2.2" paint-order="stroke"/><circle cx="37.2" cy="17.4" r="3.1" fill="#424242"/><circle cx="37.2" cy="17.4" r="1.7" fill="#fff"/></svg>
<span class="t" style="left:157.11px;top:13.96px;font-size:27.75px;line-height:27.75px;-webkit-text-stroke:1.1px #3d3d3d;color:#3d3d3d;transform:scaleX(0.9271);">WATS</span>
<span class="t" style="left:286.29px;top:15.68px;font-size:23.0px;line-height:23.0px;-webkit-text-stroke:1.1px #3d3d3d;color:#3d3d3d;transform:scaleX(1.1410);">Reporting</span>
<span class="t" style="left:452.89px;top:15.68px;font-size:23.0px;line-height:23.0px;-webkit-text-stroke:1.1px #3d3d3d;color:#3d3d3d;transform:scaleX(1.1285);">Repair reports</span>
<span class="t" style="left:1092.88px;top:14.29px;font-size:26.0px;line-height:26.0px;font-weight:400;color:#6e5d2a;transform:scaleX(0.9159);">Search</span>
<span class="t" style="left:2216.85px;top:14.29px;font-size:26.0px;line-height:26.0px;font-weight:700;color:#ffffff;transform:scaleX(0.9538);">0</span>
<span class="t" style="left:2408.00px;top:13.99px;font-size:26.0px;line-height:26.0px;font-weight:700;color:#ffffff;transform:scaleX(0.8365);">AR</span>
<span class="t" style="left:208.36px;top:98.98px;font-size:34.75px;line-height:34.75px;font-weight:400;color:#ffffff;transform:scaleX(0.8203);">REPAIR REPORTS</span>
<span class="t" style="left:208.00px;top:134.38px;font-size:30.5px;line-height:30.5px;font-weight:400;color:#9a9a9a;transform:scaleX(0.9623);">Test &amp; repair</span>
<span class="t" style="left:2252.72px;top:154.92px;font-size:24.25px;line-height:24.25px;-webkit-text-stroke:1.1px #ffffff;color:#ffffff;transform:scaleX(1.0721);">Filter</span>
<span class="t" style="left:2252.74px;top:208.72px;font-size:24.25px;line-height:24.25px;-webkit-text-stroke:1.1px #ffffff;color:#ffffff;transform:scaleX(1.0170);">UUR grid</span>
<span class="t" style="left:2252.73px;top:262.72px;font-size:24.25px;line-height:24.25px;-webkit-text-stroke:1.1px #ffffff;color:#ffffff;transform:scaleX(1.0493);">Pie chart</span>
<span class="t" style="left:128.72px;top:209.02px;font-size:24.25px;line-height:24.25px;-webkit-text-stroke:1.1px #c4c4c4;color:#c4c4c4;transform:scaleX(1.0643);">Product groups</span>
<span class="t" style="left:128.75px;top:266.92px;font-size:24.25px;line-height:24.25px;-webkit-text-stroke:1.1px #c4c4c4;color:#c4c4c4;transform:scaleX(0.9933);">Levels</span>
<span class="t" style="left:128.72px;top:324.72px;font-size:24.25px;line-height:24.25px;-webkit-text-stroke:1.1px #c4c4c4;color:#c4c4c4;transform:scaleX(1.0703);">Serial number</span>
<span class="t" style="left:128.71px;top:382.92px;font-size:24.25px;line-height:24.25px;-webkit-text-stroke:1.1px #c4c4c4;color:#c4c4c4;transform:scaleX(1.0902);">Part number</span>
<span class="t" style="left:128.74px;top:440.92px;font-size:24.25px;line-height:24.25px;-webkit-text-stroke:1.1px #c4c4c4;color:#c4c4c4;transform:scaleX(1.0283);">Revision</span>
<span class="t" style="left:128.71px;top:499.22px;font-size:24.25px;line-height:24.25px;-webkit-text-stroke:1.1px #c4c4c4;color:#c4c4c4;transform:scaleX(1.0822);">Batch number</span>
<span class="t" style="left:128.72px;top:556.92px;font-size:24.25px;line-height:24.25px;-webkit-text-stroke:1.1px #c4c4c4;color:#c4c4c4;transform:scaleX(1.0722);">Station name</span>
<span class="t" style="left:129.78px;top:614.42px;font-size:24.25px;line-height:24.25px;-webkit-text-stroke:1.1px #c4c4c4;color:#c4c4c4;transform:scaleX(1.0552);">Top count</span>
<span class="t" style="left:373.24px;top:202.84px;font-size:25.0px;line-height:25.0px;font-weight:400;color:#8c8c8c;transform:scaleX(0.9634);">(Any)</span>
<span class="t" style="left:373.25px;top:261.80px;font-size:25.75px;line-height:25.75px;font-weight:400;color:#ffffff;transform:scaleX(0.9535);">live.WATS.com, - ContractManufacturer A...</span>
<span class="t" style="left:373.44px;top:386.40px;font-size:25.75px;line-height:25.75px;font-weight:400;color:#ffffff;transform:scaleX(0.9586);">297493</span>
<span class="t" style="left:373.45px;top:440.20px;font-size:25.75px;line-height:25.75px;font-weight:400;color:#ffffff;transform:scaleX(0.9456);">1.3</span>
<span class="t" style="left:373.44px;top:613.80px;font-size:25.75px;line-height:25.75px;font-weight:400;color:#ffffff;transform:scaleX(0.9560);">1000</span>
<span class="t" style="left:929.19px;top:208.62px;font-size:24.25px;line-height:24.25px;-webkit-text-stroke:1.1px #c4c4c4;color:#c4c4c4;transform:scaleX(1.0663);">Test operations</span>
<span class="t" style="left:928.12px;top:266.92px;font-size:24.25px;line-height:24.25px;-webkit-text-stroke:1.1px #c4c4c4;color:#c4c4c4;transform:scaleX(1.0695);">Repair operations</span>
<span class="t" style="left:928.13px;top:324.92px;font-size:24.25px;line-height:24.25px;-webkit-text-stroke:1.1px #c4c4c4;color:#c4c4c4;transform:scaleX(1.0494);">Misc info desc</span>
<span class="t" style="left:928.12px;top:383.92px;font-size:24.25px;line-height:24.25px;-webkit-text-stroke:1.1px #c4c4c4;color:#c4c4c4;transform:scaleX(1.0688);">Misc info value</span>
<span class="t" style="left:928.14px;top:440.72px;font-size:24.25px;line-height:24.25px;-webkit-text-stroke:1.1px #c4c4c4;color:#c4c4c4;transform:scaleX(1.0156);">From date (UTC)</span>
<span class="t" style="left:929.15px;top:498.92px;font-size:24.25px;line-height:24.25px;-webkit-text-stroke:1.1px #c4c4c4;color:#c4c4c4;transform:scaleX(0.9961);">To date (UTC)</span>
<span class="t" style="left:1173.87px;top:204.00px;font-size:25.75px;line-height:25.75px;font-weight:400;color:#ffffff;transform:scaleX(0.9174);">PCBA Test (code:50)</span>
<span class="t" style="left:1173.76px;top:262.20px;font-size:25.75px;line-height:25.75px;font-weight:400;color:#ffffff;transform:scaleX(0.9717);">Module Production Repair (code:6001)</span>
<span class="t" style="left:1177.06px;top:445.90px;font-size:25.75px;line-height:25.75px;font-weight:400;color:#ffffff;transform:scaleX(0.9421);">2021-Dec-26</span>
<span class="t" style="left:1513.00px;top:446.64px;font-size:25.0px;line-height:25.0px;font-weight:400;color:#ffffff;transform:scaleX(0.9634);">00:00</span>
<span class="t" style="left:186.10px;top:727.76px;font-size:26.75px;line-height:26.75px;font-weight:400;color:#ffffff;transform:scaleX(0.9634);">Apply filter</span>
<span class="t" style="left:390.25px;top:727.76px;font-size:26.75px;line-height:26.75px;font-weight:400;color:#ffffff;transform:scaleX(0.9522);">Clear filter</span>
<span class="t" style="left:590.50px;top:727.76px;font-size:26.75px;line-height:26.75px;font-weight:400;color:#ffffff;transform:scaleX(0.9050);">Share</span>
<span class="t" style="left:738.36px;top:727.76px;font-size:26.75px;line-height:26.75px;font-weight:400;color:#ffffff;transform:scaleX(0.9711);">My filters</span>
<span class="t" style="left:122.70px;top:825.63px;font-size:25.25px;line-height:25.25px;font-weight:400;color:#ffffff;">Displaying 88 of 88 reports</span>
<span class="t" style="left:1558.43px;top:819.35px;font-size:24.75px;line-height:24.75px;font-weight:400;color:#ffffff;transform:scaleX(1.0351);">Export</span>
<span class="t" style="left:1706.57px;top:819.35px;font-size:24.75px;line-height:24.75px;font-weight:400;color:#ffffff;transform:scaleX(1.0340);">Column options</span>
<span class="t" style="left:1958.50px;top:819.35px;font-size:24.75px;line-height:24.75px;font-weight:400;color:#ffffff;transform:scaleX(1.0286);">Add to dashboard</span>
<span class="t" style="left:444.24px;top:883.21px;font-size:24.5px;line-height:24.5px;-webkit-text-stroke:1.1px #b9b9b9;color:#b9b9b9;transform:scaleX(1.0208);">Serial n...</span>
<span class="t" style="left:612.65px;top:883.21px;font-size:24.5px;line-height:24.5px;-webkit-text-stroke:1.1px #b9b9b9;color:#b9b9b9;transform:scaleX(1.0661);">Part nu...</span>
<span class="t" style="left:782.19px;top:883.21px;font-size:24.5px;line-height:24.5px;-webkit-text-stroke:1.1px #b9b9b9;color:#b9b9b9;transform:scaleX(1.0394);">Produc...</span>
<span class="t" style="left:951.72px;top:883.21px;font-size:24.5px;line-height:24.5px;-webkit-text-stroke:1.1px #b9b9b9;color:#b9b9b9;transform:scaleX(1.0235);">Revision</span>
<span class="t" style="left:1121.52px;top:883.21px;font-size:24.5px;line-height:24.5px;-webkit-text-stroke:1.1px #b9b9b9;color:#b9b9b9;transform:scaleX(1.0558);">UTC Start date/time</span>
<span class="t" style="left:1429.52px;top:883.21px;font-size:24.5px;line-height:24.5px;-webkit-text-stroke:1.1px #b9b9b9;color:#b9b9b9;transform:scaleX(1.0239);">Repair ...</span>
<span class="t" style="left:1600.56px;top:883.21px;font-size:24.5px;line-height:24.5px;-webkit-text-stroke:1.1px #b9b9b9;color:#b9b9b9;transform:scaleX(1.0233);">Test op...</span>
<span class="t" style="left:1769.03px;top:883.21px;font-size:24.5px;line-height:24.5px;-webkit-text-stroke:1.1px #b9b9b9;color:#b9b9b9;transform:scaleX(1.0462);">Station ...</span>
<span class="t" style="left:1939.16px;top:883.21px;font-size:24.5px;line-height:24.5px;-webkit-text-stroke:1.1px #b9b9b9;color:#b9b9b9;transform:scaleX(1.0217);">Test sta...</span>
<span class="t" style="left:443.76px;top:949.98px;font-size:24.0px;line-height:24.0px;font-weight:400;color:#ffffff;transform:scaleX(0.9383);">1700710468...</span>
<span class="t" style="left:613.26px;top:949.98px;font-size:24.0px;line-height:24.0px;font-weight:400;color:#ffffff;transform:scaleX(0.9360);">297493</span>
<span class="t" style="left:782.77px;top:949.98px;font-size:24.0px;line-height:24.0px;font-weight:400;color:#ffffff;transform:scaleX(0.9321);">NB Environ...</span>
<span class="t" style="left:952.10px;top:949.98px;font-size:24.0px;line-height:24.0px;font-weight:400;color:#ffffff;transform:scaleX(0.8964);">1.3</span>
<span class="t" style="left:1121.09px;top:949.98px;font-size:24.0px;line-height:24.0px;font-weight:400;color:#ffffff;transform:scaleX(0.9100);">2022-Jan-25 08:37:12</span>
<span class="t" style="left:1430.04px;top:949.98px;font-size:24.0px;line-height:24.0px;font-weight:400;color:#ffffff;transform:scaleX(0.9567);">Module Pro...</span>
<span class="t" style="left:1599.12px;top:949.98px;font-size:24.0px;line-height:24.0px;font-weight:400;color:#ffffff;transform:scaleX(0.8815);">PCBA Test</span>
<span class="t" style="left:1769.50px;top:949.98px;font-size:24.0px;line-height:24.0px;font-weight:400;color:#ffffff;transform:scaleX(0.8682);">VTCNDG (We...</span>
<span class="t" style="left:1938.60px;top:949.98px;font-size:24.0px;line-height:24.0px;font-weight:400;color:#ffffff;transform:scaleX(0.8502);">VTECH-MTS-...</span>
<span class="t" style="left:443.76px;top:1015.98px;font-size:24.0px;line-height:24.0px;font-weight:400;color:#ffffff;transform:scaleX(0.9383);">1708710134...</span>
<span class="t" style="left:613.26px;top:1015.98px;font-size:24.0px;line-height:24.0px;font-weight:400;color:#ffffff;transform:scaleX(0.9360);">297493</span>
<span class="t" style="left:782.77px;top:1015.98px;font-size:24.0px;line-height:24.0px;font-weight:400;color:#ffffff;transform:scaleX(0.9321);">NB Environ...</span>
<span class="t" style="left:952.10px;top:1015.98px;font-size:24.0px;line-height:24.0px;font-weight:400;color:#ffffff;transform:scaleX(0.8964);">1.3</span>
<span class="t" style="left:1121.09px;top:1015.98px;font-size:24.0px;line-height:24.0px;font-weight:400;color:#ffffff;transform:scaleX(0.9100);">2022-Jan-25 07:13:23</span>
<span class="t" style="left:1430.04px;top:1015.98px;font-size:24.0px;line-height:24.0px;font-weight:400;color:#ffffff;transform:scaleX(0.9567);">Module Pro...</span>
<span class="t" style="left:1599.12px;top:1015.98px;font-size:24.0px;line-height:24.0px;font-weight:400;color:#ffffff;transform:scaleX(0.8815);">PCBA Test</span>
<span class="t" style="left:1769.50px;top:1015.98px;font-size:24.0px;line-height:24.0px;font-weight:400;color:#ffffff;transform:scaleX(0.8682);">VTCNDG (We...</span>
<span class="t" style="left:1938.60px;top:1015.98px;font-size:24.0px;line-height:24.0px;font-weight:400;color:#ffffff;transform:scaleX(0.8502);">VTECH-MTS-...</span>
<span class="t" style="left:443.76px;top:1081.98px;font-size:24.0px;line-height:24.0px;font-weight:400;color:#ffffff;transform:scaleX(0.9383);">1704711069...</span>
<span class="t" style="left:613.26px;top:1081.98px;font-size:24.0px;line-height:24.0px;font-weight:400;color:#ffffff;transform:scaleX(0.9360);">297493</span>
<span class="t" style="left:782.77px;top:1081.98px;font-size:24.0px;line-height:24.0px;font-weight:400;color:#ffffff;transform:scaleX(0.9321);">NB Environ...</span>
<span class="t" style="left:952.10px;top:1081.98px;font-size:24.0px;line-height:24.0px;font-weight:400;color:#ffffff;transform:scaleX(0.8964);">1.3</span>
<span class="t" style="left:1121.09px;top:1081.98px;font-size:24.0px;line-height:24.0px;font-weight:400;color:#ffffff;transform:scaleX(0.9100);">2022-Jan-25 07:09:59</span>
<span class="t" style="left:1430.04px;top:1081.98px;font-size:24.0px;line-height:24.0px;font-weight:400;color:#ffffff;transform:scaleX(0.9567);">Module Pro...</span>
<span class="t" style="left:1599.12px;top:1081.98px;font-size:24.0px;line-height:24.0px;font-weight:400;color:#ffffff;transform:scaleX(0.8815);">PCBA Test</span>
<span class="t" style="left:1769.50px;top:1081.98px;font-size:24.0px;line-height:24.0px;font-weight:400;color:#ffffff;transform:scaleX(0.8682);">VTCNDG (We...</span>
<span class="t" style="left:1938.60px;top:1081.98px;font-size:24.0px;line-height:24.0px;font-weight:400;color:#ffffff;transform:scaleX(0.8502);">VTECH-MTS-...</span>
<span class="t" style="left:443.76px;top:1147.98px;font-size:24.0px;line-height:24.0px;font-weight:400;color:#ffffff;transform:scaleX(0.9383);">1709710109...</span>
<span class="t" style="left:613.26px;top:1147.98px;font-size:24.0px;line-height:24.0px;font-weight:400;color:#ffffff;transform:scaleX(0.9360);">297493</span>
<span class="t" style="left:782.77px;top:1147.98px;font-size:24.0px;line-height:24.0px;font-weight:400;color:#ffffff;transform:scaleX(0.9321);">NB Environ...</span>
<span class="t" style="left:952.10px;top:1147.98px;font-size:24.0px;line-height:24.0px;font-weight:400;color:#ffffff;transform:scaleX(0.8964);">1.3</span>
<span class="t" style="left:1121.09px;top:1147.98px;font-size:24.0px;line-height:24.0px;font-weight:400;color:#ffffff;transform:scaleX(0.9100);">2022-Jan-25 06:33:01</span>
<span class="t" style="left:1430.04px;top:1147.98px;font-size:24.0px;line-height:24.0px;font-weight:400;color:#ffffff;transform:scaleX(0.9567);">Module Pro...</span>
<span class="t" style="left:1599.12px;top:1147.98px;font-size:24.0px;line-height:24.0px;font-weight:400;color:#ffffff;transform:scaleX(0.8815);">PCBA Test</span>
<span class="t" style="left:1769.50px;top:1147.98px;font-size:24.0px;line-height:24.0px;font-weight:400;color:#ffffff;transform:scaleX(0.8682);">VTCNDG (We...</span>
<span class="t" style="left:1938.60px;top:1147.98px;font-size:24.0px;line-height:24.0px;font-weight:400;color:#ffffff;transform:scaleX(0.8502);">VTECH-MTS-...</span>
<span class="t" style="left:443.76px;top:1213.98px;font-size:24.0px;line-height:24.0px;font-weight:400;color:#ffffff;transform:scaleX(0.9383);">1708710135...</span>
<span class="t" style="left:613.26px;top:1213.98px;font-size:24.0px;line-height:24.0px;font-weight:400;color:#ffffff;transform:scaleX(0.9360);">297493</span>
<span class="t" style="left:782.77px;top:1213.98px;font-size:24.0px;line-height:24.0px;font-weight:400;color:#ffffff;transform:scaleX(0.9321);">NB Environ...</span>
<span class="t" style="left:952.10px;top:1213.98px;font-size:24.0px;line-height:24.0px;font-weight:400;color:#ffffff;transform:scaleX(0.8964);">1.3</span>
<span class="t" style="left:1121.09px;top:1213.98px;font-size:24.0px;line-height:24.0px;font-weight:400;color:#ffffff;transform:scaleX(0.9100);">2022-Jan-25 06:18:27</span>
<span class="t" style="left:1430.04px;top:1213.98px;font-size:24.0px;line-height:24.0px;font-weight:400;color:#ffffff;transform:scaleX(0.9567);">Module Pro...</span>
<span class="t" style="left:1599.12px;top:1213.98px;font-size:24.0px;line-height:24.0px;font-weight:400;color:#ffffff;transform:scaleX(0.8815);">PCBA Test</span>
<span class="t" style="left:1769.50px;top:1213.98px;font-size:24.0px;line-height:24.0px;font-weight:400;color:#ffffff;transform:scaleX(0.8682);">VTCNDG (We...</span>
<span class="t" style="left:1938.60px;top:1213.98px;font-size:24.0px;line-height:24.0px;font-weight:400;color:#ffffff;transform:scaleX(0.8502);">VTECH-MTS-...</span>
<span class="t" style="left:443.76px;top:1279.98px;font-size:24.0px;line-height:24.0px;font-weight:400;color:#ffffff;transform:scaleX(0.9383);">1709710109...</span>
<span class="t" style="left:613.26px;top:1279.98px;font-size:24.0px;line-height:24.0px;font-weight:400;color:#ffffff;transform:scaleX(0.9360);">297493</span>
<span class="t" style="left:782.77px;top:1279.98px;font-size:24.0px;line-height:24.0px;font-weight:400;color:#ffffff;transform:scaleX(0.9321);">NB Environ...</span>
<span class="t" style="left:952.10px;top:1279.98px;font-size:24.0px;line-height:24.0px;font-weight:400;color:#ffffff;transform:scaleX(0.8964);">1.3</span>
<span class="t" style="left:1121.09px;top:1279.98px;font-size:24.0px;line-height:24.0px;font-weight:400;color:#ffffff;transform:scaleX(0.9100);">2022-Jan-25 06:08:00</span>
<span class="t" style="left:1430.04px;top:1279.98px;font-size:24.0px;line-height:24.0px;font-weight:400;color:#ffffff;transform:scaleX(0.9567);">Module Pro...</span>
<span class="t" style="left:1599.12px;top:1279.98px;font-size:24.0px;line-height:24.0px;font-weight:400;color:#ffffff;transform:scaleX(0.8815);">PCBA Test</span>
<span class="t" style="left:1769.50px;top:1279.98px;font-size:24.0px;line-height:24.0px;font-weight:400;color:#ffffff;transform:scaleX(0.8682);">VTCNDG (We...</span>
<span class="t" style="left:1938.60px;top:1279.98px;font-size:24.0px;line-height:24.0px;font-weight:400;color:#ffffff;transform:scaleX(0.8502);">VTECH-MTS-...</span>
</body></html>
